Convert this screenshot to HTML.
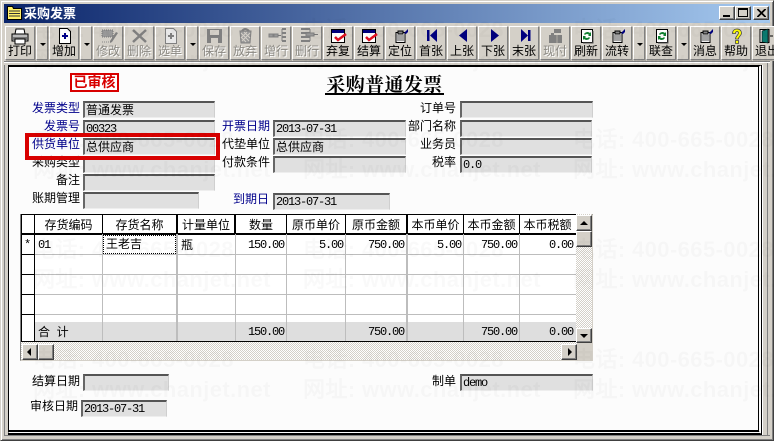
<!DOCTYPE html>
<html><head><meta charset="utf-8"><style>
html,body{margin:0;padding:0}
body{width:774px;height:441px;overflow:hidden;position:relative;background:#d4d0c8;font:12px "Liberation Sans","WenQuanYi Zen Hei","Noto Sans CJK SC",sans-serif;color:#000}
div,svg{position:absolute;box-sizing:border-box}
.title{left:4px;top:4px;width:766px;height:19px;background:linear-gradient(90deg,#0a246a,#a6caf0)}
.b{top:26px;height:34px;background:#d4d0c8;border:1px solid;border-color:#fff #808080 #808080 #fff;box-shadow:1px 1px 0 #b0aca4}
.t{left:-1px;right:-1px;top:17px;text-align:center;font-size:12px;line-height:14px;white-space:nowrap}
.d .t{color:#8c8a84;text-shadow:1px 1px 0 #fff}
.b svg{left:4px;top:1px}
.ar{left:3px;top:16px;width:0;height:0;border:3px solid transparent;border-top:3px solid #000;border-bottom:0;margin-left:0}
.l{text-align:right;white-space:nowrap;line-height:14px;height:14px}
.bl{color:#00008b}
.f{background:#e0e0e0;border-style:solid;border-width:2px 1px 1px 2px;border-color:#555 #cfcfcf #eee #666;font:12px/15px "Liberation Mono","WenQuanYi Zen Hei",monospace;letter-spacing:-1.2px;padding-left:1px;white-space:nowrap;overflow:hidden;height:17px}
.f span{font:12px/14px "WenQuanYi Zen Hei","Noto Sans CJK SC",sans-serif;letter-spacing:0}
.h{top:216px;height:18px;text-align:center;line-height:18px;white-space:nowrap}
.hl{top:254px;height:1px;background:#bdbdbd;left:35px;width:541px}
.v{top:234px;height:107px;width:1px;background:#bdbdbd}
.c{font:12px/14px "Liberation Mono",monospace;letter-spacing:-1.2px;text-align:right;white-space:nowrap}
.sb{background:#d4d0c8;border:1px solid;border-color:#fff #404040 #404040 #fff;box-shadow:inset -1px -1px 0 #808080}
.wm{font:bold 22px/24px "Liberation Sans","WenQuanYi Zen Hei",sans-serif;color:rgba(0,0,0,.022);white-space:nowrap;letter-spacing:.4px;z-index:9;pointer-events:none}
.hatch{background:repeating-conic-gradient(#d4d0c8 0 25%,#fff 0 50%) 0 0/2px 2px}
</style></head><body>

<div style="left:0;top:0;width:774px;height:441px;border:1px solid;border-color:#d4d0c8 #404040 #404040 #d4d0c8;box-shadow:inset 1px 1px 0 #fff,inset -1px -1px 0 #808080"></div>
<div class="title"></div>
<svg style="left:7px;top:6px" width="15" height="14" viewBox="0 0 15 14"><path d="M.5.5h5l1 2h8v11H.5z" fill="#ffef6a" stroke="#000"/><path d="M2 5h11M2 7.500h11M2 10h11" stroke="#333"/></svg>
<div style="left:24px;top:6px;color:#fff;font-weight:bold;font-size:13px;line-height:15px;white-space:nowrap">采购发票</div>
<div class="sb" style="left:719px;top:6px;width:16px;height:14px"><div style="left:3px;top:8px;width:7px;height:2px;background:#000"></div></div>
<div class="sb" style="left:735px;top:6px;width:16px;height:14px"><div style="left:2px;top:1px;width:10px;height:9px;border:1px solid #000;border-top-width:2px"></div></div>
<div class="sb" style="left:753px;top:6px;width:16px;height:14px"><svg style="left:3px;top:2px" width="9" height="8"><path d="M0 0l8 8M1 0l8 8M8 0L0 8M9 0L1 8" stroke="#000"/></svg></div>

<!-- toolbar -->
<div class="b" style="left:5px;width:30px"><svg width="20" height="17" viewBox="0 0 20 17"><path d="M6 1h8l1 5H5z" fill="#fff" stroke="#000"/><path d="M2 6h16v7H2z" fill="#bbb" stroke="#000"/><path d="M3 9h14v4H3z" fill="#777"/><path d="M5 11h10v5H5z" fill="#fff" stroke="#000"/></svg><div class="t">打印</div></div>
<div class="b" style="left:36px;width:12px"><div class="ar"></div></div>
<div class="b" style="left:49px;width:30px"><svg style="left:8px" width="14" height="17" viewBox="0 0 14 17"><path d="M1.500.5h8l3 3v12h-11z" fill="#fff" stroke="#000"/><path d="M4 8h6M7 5v6" stroke="#00008b" stroke-width="2"/></svg><div class="t">增加</div></div>
<div class="b" style="left:80px;width:12px"><div class="ar"></div></div>
<div class="b d" style="left:93px;width:30px"><svg style="left:6px" width="20" height="17" viewBox="0 0 20 17"><path d="M2 2h11v7H2z" fill="#999" stroke="#777" stroke-dasharray="1 1"/><path d="M16 4l2 1-6 9-2 1v-2z" fill="#808080"/><path d="M2 14h7" stroke="#888" stroke-dasharray="1 1"/></svg><div class="t">修改</div></div>
<div class="b d" style="left:124px;width:30px"><svg style="left:6px" width="18" height="16" viewBox="0 0 18 16"><path d="M2 2l13 12M15 2L2 14" stroke="#808080" stroke-width="2.500"/></svg><div class="t">删除</div></div>
<div class="b d" style="left:155px;width:30px"><svg style="left:8px" width="14" height="17" viewBox="0 0 14 17"><path d="M1.500.5h8l3 3v12h-11z" fill="#e8e8e8" stroke="#808080"/><path d="M4 8h6M7 5v6" stroke="#808080" stroke-width="2"/></svg><div class="t">选单</div></div>
<div class="b" style="left:186px;width:12px"><div class="ar"></div></div>
<div class="b d" style="left:199px;width:30px"><svg style="left:6px" width="17" height="16" viewBox="0 0 17 16"><path d="M1 1h15v14H1z" fill="#808080"/><path d="M4 2h9v5H4z" fill="#d4d0c8"/><path d="M5 10h7v5H5z" fill="#d4d0c8"/></svg><div class="t">保存</div></div>
<div class="b d" style="left:230px;width:30px"><svg style="left:7px" width="15" height="16" viewBox="0 0 15 16"><path d="M2 3h11l-1 12H3z" fill="#999" stroke="#808080"/><path d="M3 5l8 8M6 4l6 6M3 9l5 5M12 5l-8 8M9 4l-6 6" stroke="#d4d0c8"/><path d="M4 3q3-4 7 0" fill="none" stroke="#808080" stroke-width="2"/></svg><div class="t">放弃</div></div>
<div class="b d" style="left:261px;width:30px"><svg style="left:5px" width="21" height="17" viewBox="0 0 21 17"><path d="M15 1h4M15 5h4M15 9h4M15 13h4" stroke="#808080" stroke-width="2"/><path d="M15 1v12" stroke="#808080"/><path d="M2 6h4v3H2zM7 6h4v3H7z" fill="#999" stroke="#808080"/><path d="M11 7.500h3" stroke="#777"/></svg><div class="t">增行</div></div>
<div class="b d" style="left:292px;width:30px"><svg style="left:5px" width="21" height="17" viewBox="0 0 21 17"><path d="M3 1h9M3 5h9M3 9h9M3 13h9" stroke="#808080" stroke-width="2"/><path d="M12 1v12" stroke="#808080"/><path d="M8 5h8v3H8z" fill="#999" stroke="#808080"/><path d="M16 6.500h4" stroke="#777"/></svg><div class="t">删行</div></div>
<div class="b" style="left:323px;width:30px"><svg style="left:7px" width="18" height="16" viewBox="0 0 18 16"><path d="M.5 1.500h13v13H.5z" fill="#fff" stroke="#000"/><path d="M1 2h12v3H1z" fill="#00007f"/><path d="M4 9l3 3 8-6" fill="none" stroke="#e01020" stroke-width="2.500"/></svg><div class="t">弃复</div></div>
<div class="b" style="left:354px;width:30px"><svg style="left:7px" width="18" height="16" viewBox="0 0 18 16"><path d="M.5 1.500h13v13H.5z" fill="#fff" stroke="#000"/><path d="M1 2h12v3H1z" fill="#00007f"/><path d="M4 9l3 3 8-6" fill="none" stroke="#e01020" stroke-width="2.500"/></svg><div class="t">结算</div></div>
<div class="b" style="left:385px;width:30px"><svg style="left:8px" width="15" height="15" viewBox="0 0 15 15"><path d="M2 4.500h9v10H2z" fill="#eee" stroke="#000"/><path d="M3 8h7M3 10h7M3 12h7" stroke="#555"/><path d="M4 3h5v3H4z" fill="#888" stroke="#000"/><path d="M10 5l4-4v3l-2 2z" fill="#00007f"/></svg><div class="t">定位</div></div>
<div class="b" style="left:416px;width:30px"><svg style="left:10px" width="12" height="15" viewBox="0 0 12 15"><path d="M0 2h2.500v11H0zM10 1v13L3 7.500z" fill="#00007f"/></svg><div class="t">首张</div></div>
<div class="b" style="left:447px;width:30px"><svg style="left:10px" width="12" height="15" viewBox="0 0 12 15"><path d="M9 1v13L1 7.500z" fill="#00007f"/></svg><div class="t">上张</div></div>
<div class="b" style="left:478px;width:30px"><svg style="left:10px" width="12" height="15" viewBox="0 0 12 15"><path d="M2 1v13l8-6.500z" fill="#00007f"/></svg><div class="t">下张</div></div>
<div class="b" style="left:509px;width:30px"><svg style="left:10px" width="12" height="15" viewBox="0 0 12 15"><path d="M1 1v13l7-6.500zM8 2h2.500v11H8z" fill="#00007f"/></svg><div class="t">末张</div></div>
<div class="b d" style="left:540px;width:30px"><svg style="left:7px" width="16" height="16" viewBox="0 0 16 16"><path d="M6 1h7v4H6zM1 7h13v8H1z" fill="#808080"/><path d="M3 5h3v2H3z" fill="#808080"/><path d="M9 7v8" stroke="#b0aca4"/></svg><div class="t">现付</div></div>
<div class="b" style="left:571px;width:30px"><svg style="left:8px" width="15" height="16" viewBox="0 0 15 16"><path d="M1.500 1.500h11v13h-11z" fill="#fff" stroke="#000"/><path d="M4 6a4 4 0 0 1 6-1l1-1v4H8l1-1a2.500 2.500 0 0 0-4 0zM10 10a4 4 0 0 1-6 1l-1 1V8h3l-1 1a2.500 2.500 0 0 0 4 0z" fill="#108030"/><path d="M13 3v12H3" stroke="#555" fill="none"/></svg><div class="t">刷新</div></div>
<div class="b" style="left:602px;width:30px"><svg style="left:8px" width="15" height="15" viewBox="0 0 15 15"><path d="M2 4.500h9v10H2z" fill="#eee" stroke="#000"/><path d="M3 8h7M3 10h7M3 12h7" stroke="#555"/><path d="M4 3h5v3H4z" fill="#888" stroke="#000"/><path d="M10 5l4-4v3l-2 2z" fill="#00007f"/></svg><div class="t">流转</div></div>
<div class="b" style="left:633px;width:12px"><div class="ar"></div></div>
<div class="b" style="left:646px;width:30px"><svg style="left:8px" width="15" height="16" viewBox="0 0 15 16"><path d="M1.500 1.500h11v13h-11z" fill="#fff" stroke="#000"/><path d="M4 6a4 4 0 0 1 6-1l1-1v4H8l1-1a2.500 2.500 0 0 0-4 0zM10 10a4 4 0 0 1-6 1l-1 1V8h3l-1 1a2.500 2.500 0 0 0 4 0z" fill="#108030"/><path d="M13 3v12H3" stroke="#555" fill="none"/></svg><div class="t">联查</div></div>
<div class="b" style="left:677px;width:12px"><div class="ar"></div></div>
<div class="b" style="left:690px;width:30px"><svg style="left:8px" width="15" height="15" viewBox="0 0 15 15"><path d="M2 4.500h9v10H2z" fill="#eee" stroke="#000"/><path d="M3 8h7M3 10h7M3 12h7" stroke="#555"/><path d="M4 3h5v3H4z" fill="#888" stroke="#000"/><path d="M10 5l4-4v3l-2 2z" fill="#00007f"/></svg><div class="t">消息</div></div>
<div class="b" style="left:721px;width:30px"><svg style="left:9px" width="12" height="16" viewBox="0 0 12 16"><path d="M1.500 5.500C1.500 2.500 3.500 1 6 1s4.500 1.500 4.500 4c0 3-3 3-3 6h-3c0-3 3-4 3-6 0-1-.5-1.500-1.500-1.500S4.500 4 4.500 5.500z" fill="#ff0" stroke="#444" stroke-width=".8"/><path d="M4.500 12.500h3v3h-3z" fill="#ff0" stroke="#444" stroke-width=".8"/></svg><div class="t">帮助</div></div>
<div class="b" style="left:752px;width:30px"><svg style="left:6px" width="16" height="16" viewBox="0 0 16 16"><path d="M1 1.500h9v13H1z" fill="#fff" stroke="#000"/><path d="M3 3l6-2v14l-6-1z" fill="#0b7a70" stroke="#000" stroke-width=".6"/><path d="M11 8h3" stroke="#000"/></svg><div class="t" style="left:2px;right:auto;text-align:left">退出</div></div>
<div style="left:4px;top:61px;width:766px;height:2px;border-top:1px solid #808080;border-bottom:1px solid #fff"></div>

<!-- form frame -->
<div style="left:8px;top:65px;width:754px;height:370px;background:#fcfcfc;border:2px solid #000;border-right:4px double #000;border-bottom:5px double #000;border-left-width:1px"></div>
<div style="left:4px;top:65px;width:1px;height:370px;background:#808080"></div>
<div style="left:762px;top:65px;width:1px;height:370px;background:#fff"></div>
<div style="left:767px;top:63px;width:1px;height:372px;background:#808080"></div>
<div style="left:4px;top:435px;width:766px;height:1px;background:#808080"></div>

<div style="left:70px;top:73px;width:49px;height:19px;border:2px solid #d80000;background:#fff;color:#d80000;font-weight:bold;font-size:14px;line-height:15px;text-align:center;white-space:nowrap">已审核</div>
<div style="left:325px;top:74px;width:119px;height:21px;border-bottom:2px solid #000;font:bold 19px/19px &quot;Noto Serif CJK SC&quot;,serif;white-space:nowrap;letter-spacing:.4px;text-align:center">采购普通发票</div>

<!-- labels -->
<div class="l bl" style="left:20px;top:101px;width:60px">发票类型</div>
<div class="l bl" style="left:20px;top:119px;width:60px">发票号</div>
<div class="l bl" style="left:20px;top:137px;width:60px">供货单位</div>
<div class="l" style="left:20px;top:155px;width:60px">采购类型</div>
<div class="l" style="left:20px;top:173px;width:60px">备注</div>
<div class="l" style="left:20px;top:191px;width:60px">账期管理</div>
<div class="l bl" style="left:210px;top:119px;width:60px">开票日期</div>
<div class="l" style="left:210px;top:137px;width:60px">代垫单位</div>
<div class="l" style="left:210px;top:155px;width:60px">付款条件</div>
<div class="l bl" style="left:210px;top:192px;width:59px">到期日</div>
<div class="l" style="left:396px;top:101px;width:60px">订单号</div>
<div class="l" style="left:396px;top:119px;width:60px">部门名称</div>
<div class="l" style="left:396px;top:137px;width:60px">业务员</div>
<div class="l" style="left:396px;top:155px;width:60px">税率</div>

<!-- fields -->
<div class="f" style="left:83px;top:101px;width:132px"><span>普通发票</span></div>
<div class="f" style="left:83px;top:120px;width:132px;height:16px">00323</div>
<div class="f" style="left:83px;top:138px;width:132px"><span>总供应商</span></div>
<div class="f" style="left:83px;top:156px;width:132px"></div>
<div class="f" style="left:83px;top:174px;width:132px"></div>
<div class="f" style="left:83px;top:192px;width:116px"></div>
<div class="f" style="left:273px;top:120px;width:133px">2013-07-31</div>
<div class="f" style="left:273px;top:138px;width:133px"><span>总供应商</span></div>
<div class="f" style="left:273px;top:156px;width:133px"></div>
<div class="f" style="left:273px;top:193px;width:117px">2013-07-31</div>
<div class="f" style="left:460px;top:101px;width:133px"></div>
<div class="f" style="left:460px;top:120px;width:132px"></div>
<div class="f" style="left:460px;top:138px;width:132px"></div>
<div class="f" style="left:460px;top:156px;width:132px">0.0</div>
<div style="left:25px;top:133px;width:195px;height:27px;border:4px solid #d80000"></div>

<!-- grid -->
<div style="left:20px;top:214px;width:573px;height:147px;background:#fff;border:1px solid;border-color:#808080 #d4d0c8 #d4d0c8 #808080"></div>
<div style="left:21px;top:214px;width:555px;height:1px;background:#000"></div>
<div style="left:21px;top:215px;width:1px;height:127px;background:#000"></div>
<div style="left:21px;top:233px;width:555px;height:2px;background:#000"></div>
<div style="left:35px;top:322px;width:541px;height:19px;background:#dedede"></div>
<div class="hl"></div><div class="hl" style="top:274px"></div><div class="hl" style="top:294px"></div><div class="hl" style="top:314px"></div>
<div style="left:21px;top:254px;width:13px;height:1px;background:#000"></div><div style="left:21px;top:274px;width:13px;height:1px;background:#000"></div><div style="left:21px;top:294px;width:13px;height:1px;background:#000"></div><div style="left:21px;top:314px;width:13px;height:1px;background:#000"></div>
<div style="left:34px;top:214px;width:1px;height:127px;background:#000"></div>
<div class="v" style="left:102px"></div><div class="v" style="left:176px;width:2px"></div><div class="v" style="left:235px"></div><div class="v" style="left:286px"></div><div class="v" style="left:345px"></div><div class="v" style="left:406px;width:2px"></div><div class="v" style="left:463px"></div><div class="v" style="left:519px"></div>
<div style="left:102px;top:215px;width:1px;height:18px;background:#000"></div><div style="left:176px;top:215px;width:2px;height:18px;background:#000"></div><div style="left:234px;top:215px;width:2px;height:18px;background:#000"></div><div style="left:286px;top:215px;width:1px;height:18px;background:#000"></div><div style="left:345px;top:215px;width:1px;height:18px;background:#000"></div><div style="left:406px;top:215px;width:2px;height:18px;background:#000"></div><div style="left:463px;top:215px;width:1px;height:18px;background:#000"></div><div style="left:519px;top:215px;width:1px;height:18px;background:#000"></div>
<div style="left:21px;top:341px;width:555px;height:1px;background:#000"></div>
<div class="h" style="left:35px;width:67px">存货编码</div>
<div class="h" style="left:103px;width:73px">存货名称</div>
<div class="h" style="left:178px;width:56px">计量单位</div>
<div class="h" style="left:236px;width:50px">数量</div>
<div class="h" style="left:287px;width:58px">原币单价</div>
<div class="h" style="left:346px;width:60px">原币金额</div>
<div class="h" style="left:408px;width:55px">本币单价</div>
<div class="h" style="left:464px;width:55px">本币金额</div>
<div class="h" style="left:520px;width:55px">本币税额</div>
<div class="c" style="left:24px;top:238px;text-align:left">*</div>
<div class="c" style="left:38px;top:238px;text-align:left">01</div>
<div style="left:103px;top:235px;width:73px;height:19px;border:1px dotted #000;line-height:17px;padding-left:2px">王老吉</div>
<div style="left:181px;top:238px;line-height:14px">瓶</div>
<div class="c" style="left:236px;width:48px;top:238px">150.00</div>
<div class="c" style="left:287px;width:56px;top:238px">5.00</div>
<div class="c" style="left:346px;width:58px;top:238px">750.00</div>
<div class="c" style="left:408px;width:53px;top:238px">5.00</div>
<div class="c" style="left:464px;width:53px;top:238px">750.00</div>
<div class="c" style="left:520px;width:53px;top:238px">0.00</div>
<div style="left:38px;top:325px;line-height:14px;white-space:pre">合  计</div>
<div class="c" style="left:236px;width:48px;top:325px">150.00</div>
<div class="c" style="left:346px;width:58px;top:325px">750.00</div>
<div class="c" style="left:464px;width:53px;top:325px">750.00</div>
<div class="c" style="left:520px;width:53px;top:325px">0.00</div>

<!-- scrollbars -->
<div class="hatch" style="left:576px;top:214px;width:16px;height:128px"></div>
<div class="sb" style="left:576px;top:215px;width:16px;height:16px"><div style="left:3px;top:5px;width:0;height:0;border:4px solid transparent;border-bottom:4px solid #000;border-top:0"></div></div>
<div class="sb" style="left:576px;top:231px;width:16px;height:16px"></div>
<div class="sb" style="left:576px;top:328px;width:16px;height:15px"><div style="left:3px;top:5px;width:0;height:0;border:4px solid transparent;border-top:4px solid #000;border-bottom:0"></div></div>
<div class="hatch" style="left:21px;top:342px;width:555px;height:18px"></div>
<div class="sb" style="left:22px;top:344px;width:16px;height:16px"><div style="left:4px;top:3px;width:0;height:0;border:4px solid transparent;border-right:4px solid #000;border-left:0"></div></div>
<div class="sb" style="left:38px;top:344px;width:16px;height:16px"></div>
<div class="sb" style="left:561px;top:344px;width:16px;height:16px"><div style="left:6px;top:3px;width:0;height:0;border:4px solid transparent;border-left:4px solid #000;border-right:0"></div></div>
<div style="left:577px;top:343px;width:16px;height:18px;background:#d4d0c8"></div>

<!-- bottom -->
<div class="l" style="left:20px;top:374px;width:60px">结算日期</div>
<div class="f" style="left:83px;top:374px;width:86px"></div>
<div class="l" style="left:18px;top:399px;width:60px">审核日期</div>
<div class="f" style="left:81px;top:400px;width:86px">2013-07-31</div>
<div class="l" style="left:396px;top:374px;width:60px">制单</div>
<div class="f" style="left:460px;top:374px;width:133px">demo</div>

<!-- watermarks -->
<div class="wm" style="left:33px;top:18px">电话: 400-665-0028</div><div class="wm" style="left:33px;top:48px">网址: www.chanjet.net</div>
<div class="wm" style="left:303px;top:18px">电话: 400-665-0028</div><div class="wm" style="left:303px;top:48px">网址: www.chanjet.net</div>
<div class="wm" style="left:573px;top:18px">电话: 400-665-0028</div><div class="wm" style="left:573px;top:48px">网址: www.chanjet.net</div>
<div class="wm" style="left:33px;top:128px">电话: 400-665-0028</div><div class="wm" style="left:33px;top:158px">网址: www.chanjet.net</div>
<div class="wm" style="left:303px;top:128px">电话: 400-665-0028</div><div class="wm" style="left:303px;top:158px">网址: www.chanjet.net</div>
<div class="wm" style="left:573px;top:128px">电话: 400-665-0028</div><div class="wm" style="left:573px;top:158px">网址: www.chanjet.net</div>
<div class="wm" style="left:33px;top:238px">电话: 400-665-0028</div><div class="wm" style="left:33px;top:268px">网址: www.chanjet.net</div>
<div class="wm" style="left:303px;top:238px">电话: 400-665-0028</div><div class="wm" style="left:303px;top:268px">网址: www.chanjet.net</div>
<div class="wm" style="left:573px;top:238px">电话: 400-665-0028</div><div class="wm" style="left:573px;top:268px">网址: www.chanjet.net</div>
<div class="wm" style="left:33px;top:348px">电话: 400-665-0028</div><div class="wm" style="left:33px;top:378px">网址: www.chanjet.net</div>
<div class="wm" style="left:303px;top:348px">电话: 400-665-0028</div><div class="wm" style="left:303px;top:378px">网址: www.chanjet.net</div>
<div class="wm" style="left:573px;top:348px">电话: 400-665-0028</div><div class="wm" style="left:573px;top:378px">网址: www.chanjet.net</div>
</body></html>
